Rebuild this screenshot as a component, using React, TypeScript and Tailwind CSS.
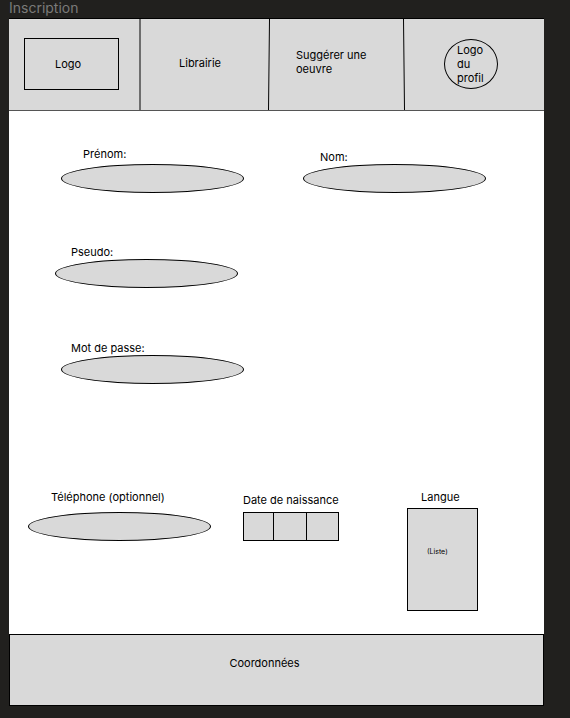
import type { ReactNode } from "react";

const shape = "border border-black bg-[#d9d9d9] outline-none";

type FieldProps = {
  id: string;
  label: string;
  type?: string;
  className?: string;
  labelClass: string;
};

function Field({ id, label, type = "text", className = "", labelClass }: FieldProps) {
  return (
    <div className={`flex w-[183px] flex-col ${className}`}>
      <label htmlFor={id} className={labelClass}>
        {label}
      </label>
      <input id={id} type={type} className={`h-[29px] w-full rounded-[50%] px-6 ${shape}`} />
    </div>
  );
}

function Divider({ from, to }: { from: number; to: number }) {
  return (
    <svg className="h-full w-[2px]" viewBox="0 0 2 92" preserveAspectRatio="none" aria-hidden="true">
      <line x1={from} y1="0" x2={to} y2="92" stroke="black" strokeWidth="1" />
    </svg>
  );
}

function NavCell({ className, children }: { className: string; children: ReactNode }) {
  return <div className={`flex min-w-0 items-center ${className}`}>{children}</div>;
}

export default function App() {
  return (
    <div className="min-h-screen bg-[#21201e] pr-[26px] pb-3 pl-[9px] font-['Inter',sans-serif] text-[11px] leading-[14px] text-black">
      <h1 className="h-[18px] text-[14px] leading-4 text-[#7a7a79]">Inscription</h1>

      <div className="bg-white">
        <header className="border-y border-t-black border-b-[#555] bg-[#d9d9d9]">
          <nav className="grid h-[91px] grid-cols-[130fr_2px_127fr_2px_133fr_2px_139fr]">
            <NavCell className="pb-px pl-[15px]">
              <a href="#accueil" className="flex h-[52px] w-[95px] items-center border border-black pb-px pl-[30px]">
                Logo
              </a>
            </NavCell>
            <Divider from={1} to={1} />
            <NavCell className="pb-[3px] pl-[38px]">
              <a href="#librairie">Librairie</a>
            </NavCell>
            <Divider from={1.5} to={0.5} />
            <NavCell className="pr-7 pb-[6px] pl-[26px]">
              <a href="#suggerer">Suggérer une oeuvre</a>
            </NavCell>
            <Divider from={0.5} to={1.5} />
            <NavCell className="pb-px pl-[39px]">
              <a href="#profil" className="flex h-[50px] w-[54px] items-center rounded-[50%] border border-black px-3">
                Logo du profil
              </a>
            </NavCell>
          </nav>
        </header>

        <form className="pt-9 pb-[23px]">
          <div className="flex items-end justify-between pr-[58px] pl-[52px]">
            <Field id="prenom" label="Prénom:" className="gap-[3px]" labelClass="pl-[22px]" />
            <Field id="nom" label="Nom:" labelClass="pl-[17px]" />
          </div>
          <div className="mt-[52px] pl-[46px]">
            <Field id="pseudo" label="Pseudo:" labelClass="pl-4" />
          </div>
          <div className="mt-[53px] pl-[52px]">
            <Field id="motdepasse" label="Mot de passe:" type="password" labelClass="pl-[10px]" />
          </div>

          <div className="mt-[106px] flex items-start pr-[66px] pl-[19px]">
            <Field id="telephone" label="Téléphone (optionnel)" type="tel" className="gap-2" labelClass="pl-[23px]" />
            <div className="ml-8 flex flex-col gap-[5px] pt-[3px]">
              <label htmlFor="jour">Date de naissance</label>
              <div className="flex">
                <input id="jour" aria-label="Jour de naissance" className={`h-[29px] w-[31px] ${shape}`} />
                <input aria-label="Mois de naissance" className={`-ml-px h-[29px] w-[34px] ${shape}`} />
                <input aria-label="Année de naissance" className={`-ml-px h-[29px] w-[33px] ${shape}`} />
              </div>
            </div>
            <div className="ml-auto flex w-[71px] flex-col gap-1">
              <label htmlFor="langue" className="pl-[14px]">
                Langue
              </label>
              <select
                id="langue"
                className={`h-[103px] w-full appearance-none pb-4 pl-[19px] text-[7px] ${shape}`}
              >
                <option>(Liste)</option>
              </select>
            </div>
          </div>
        </form>

        <footer className="flex h-[72px] items-center justify-center border border-black bg-[#d9d9d9] pr-6 pb-[14px]">
          <p>Coordonnées</p>
        </footer>
      </div>
    </div>
  );
}
